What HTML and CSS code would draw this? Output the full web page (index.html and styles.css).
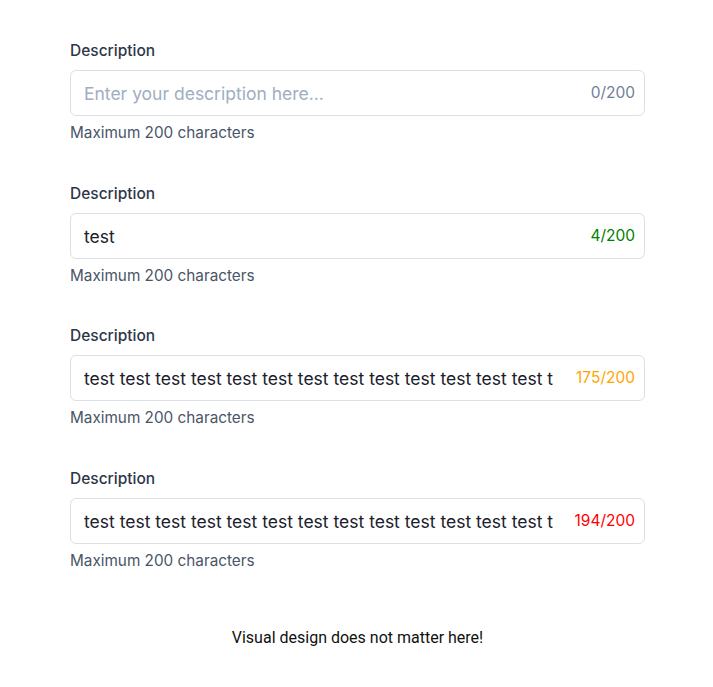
FILE: index.html
```html
<!DOCTYPE html>
<html lang="en">
<head>
<meta charset="utf-8">
<title>Description fields</title>
<link rel="stylesheet" href="styles.css">
</head>
<body>
<main class="page">
  <div class="field">
    <label class="label" for="d1">Description</label>
    <div class="input-wrap">
      <input id="d1" class="input" type="text" placeholder="Enter your description here..." value="">
      <span class="counter counter-empty">0/200</span>
    </div>
    <p class="helper">Maximum 200 characters</p>
  </div>
  <div class="field">
    <label class="label" for="d2">Description</label>
    <div class="input-wrap">
      <input id="d2" class="input" type="text" placeholder="Enter your description here..." value="test">
      <span class="counter counter-ok">4/200</span>
    </div>
    <p class="helper">Maximum 200 characters</p>
  </div>
  <div class="field">
    <label class="label" for="d3">Description</label>
    <div class="input-wrap">
      <input id="d3" class="input" type="text" placeholder="Enter your description here..." value="test test test test test test test test test test test test test test test test test test test test test test test test test test test test test test test test test test test">
      <span class="counter counter-warn">175/200</span>
    </div>
    <p class="helper">Maximum 200 characters</p>
  </div>
  <div class="field">
    <label class="label" for="d4">Description</label>
    <div class="input-wrap">
      <input id="d4" class="input" type="text" placeholder="Enter your description here..." value="test test test test test test test test test test test test test test test test test test test test test test test test test test test test test test test test test test test test test test test">
      <span class="counter counter-danger">194/200</span>
    </div>
    <p class="helper">Maximum 200 characters</p>
  </div>
  <p class="note">Visual design does not matter here!</p>
</main>
</body>
</html>
```

FILE: styles.css
```css
html, body {
  margin: 0;
  padding: 0;
  background: #ffffff;
}

body {
  font-family: Inter, "Noto Sans", sans-serif;
}

.page {
  width: 575px;
  margin: 0 68px 0 70px;
  padding-top: 41px;
  display: flex;
  flex-direction: column;
  gap: 40.5px;
}

.field {
  display: flex;
  flex-direction: column;
}

.label {
  font-size: 15.5px;
  line-height: 20px;
  font-weight: 500;
  color: #2d3748;
  margin-bottom: 9px;
}

.input-wrap {
  position: relative;
}

.input {
  box-sizing: border-box;
  width: 100%;
  height: 46px;
  margin: 0;
  padding: 1px 91px 0 13px;
  border: 1px solid #dcdfe5;
  border-radius: 6px;
  font-family: Inter, "Noto Sans", sans-serif;
  font-size: 17.5px;
  color: #1a202c;
  background: #ffffff;
  outline: none;
}

.input::placeholder {
  color: #a0aec0;
  opacity: 1;
}

.counter {
  position: absolute;
  right: 10px;
  top: 50%;
  transform: translateY(-50%);
  font-size: 15.5px;
  line-height: 20px;
}

.counter-empty { color: #718096; }
.counter-ok { color: #008000; }
.counter-warn { color: #ffa500; }
.counter-danger { color: #ff0000; }

.helper {
  margin: 7px 0 0;
  font-size: 15.3px;
  line-height: 20px;
  color: #4a5568;
}

.note {
  margin: 17px 0 0;
  text-align: center;
  font-family: Roboto, "Liberation Sans", sans-serif;
  font-size: 16px;
  line-height: 20px;
  color: #111111;
}
```
